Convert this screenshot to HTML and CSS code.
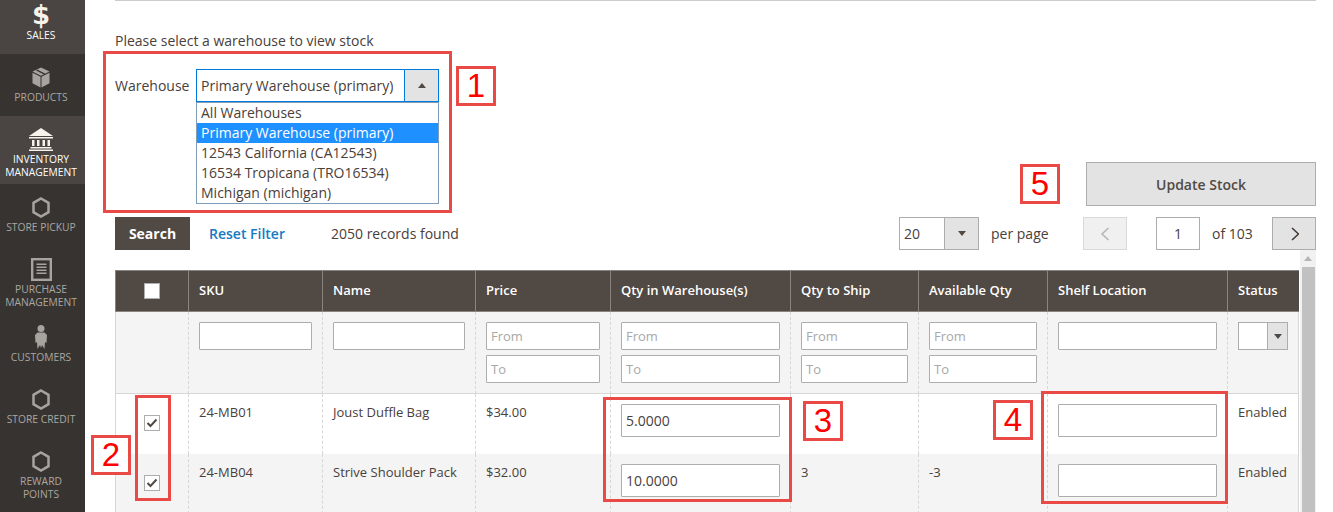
FILE: index.html
```html
<!DOCTYPE html>
<html lang="en">
  <head>
    <meta charset="UTF-8" />
    <meta name="viewport" content="width=device-width, initial-scale=1.0" />
    <title>Warehouse Stock</title>
    <link rel="stylesheet" href="styles.css">
  </head>
  <body>
    <div class="page">
      <nav class="sidebar">
        <a class="nav-item nav-first nav-active">
          <span class="nav-icon nav-dollar">$</span>
          <span class="nav-label">Sales</span>
        </a>
        <a class="nav-item">
          <span class="nav-icon">
            <svg width="18" height="21" viewBox="0 0 18 21"><path d="M9 0.500 17.500 4.500 9 8.800 0.500 4.500Z" fill="#a7a39f"/><path d="M4.500 2.300 13 6.600 13 8 4.500 3.700Z" fill="#373330"/><path d="M0.500 5.800 8.500 9.800V20.500L0.500 16.300Z" fill="#a7a39f"/><path d="M17.500 5.800 9.500 9.800V20.500L17.500 16.300Z" fill="#a7a39f"/></svg>
          </span>
          <span class="nav-label">Products</span>
        </a>
        <a class="nav-item nav-active">
          <span class="nav-icon">
            <svg width="24" height="23" viewBox="0 0 24 23"><path d="M12 0 24 8H0Z" fill="#f7f3eb"/><path d="M0 9h24v1.500H0ZM3 12h2.500v6H3ZM8 12h2.500v6H8ZM13.500 12H16v6h-2.500ZM18.500 12H21v6h-2.500ZM1.500 19h21v1.500h-21ZM0 21.500h24V23H0Z" fill="#f7f3eb"/></svg>
          </span>
          <span class="nav-label">Inventory<br>Management</span>
        </a>
        <a class="nav-item">
          <span class="nav-icon">
            <svg width="18" height="21" viewBox="0 0 18 21"><path d="M9 1.500 16.500 5.800V15.200L9 19.500 1.500 15.200V5.800Z" fill="none" stroke="#a7a39f" stroke-width="2.500"/></svg>
          </span>
          <span class="nav-label">Store Pickup</span>
        </a>
        <a class="nav-item">
          <span class="nav-icon">
            <svg width="21" height="23" viewBox="0 0 21 23"><rect x="1.200" y="1.200" width="18.600" height="20.600" fill="none" stroke="#a7a39f" stroke-width="2.400"/><path d="M5.500 5.500h10v1.500h-10ZM5.500 8.500h10v1.500h-10ZM5.500 11.500h10v1.500h-10ZM5.500 14.500h10v1.500h-10Z" fill="#a7a39f"/></svg>
          </span>
          <span class="nav-label">Purchase<br>Management</span>
        </a>
        <a class="nav-item">
          <span class="nav-icon">
            <svg width="12" height="24" viewBox="0 0 12 24"><circle cx="6" cy="3.500" r="3.500" fill="#a7a39f"/><path d="M2.500 7.500h7L12 10 11.500 18 10 17 9.500 24 7 20 6 23 5 20 2.500 24 2 17 0.500 18 0 10Z" fill="#a7a39f"/></svg>
          </span>
          <span class="nav-label">Customers</span>
        </a>
        <a class="nav-item">
          <span class="nav-icon">
            <svg width="18" height="21" viewBox="0 0 18 21"><path d="M9 1.500 16.500 5.800V15.200L9 19.500 1.500 15.200V5.800Z" fill="none" stroke="#a7a39f" stroke-width="2.500"/></svg>
          </span>
          <span class="nav-label">Store Credit</span>
        </a>
        <a class="nav-item">
          <span class="nav-icon">
            <svg width="18" height="21" viewBox="0 0 18 21"><path d="M9 1.500 16.500 5.800V15.200L9 19.500 1.500 15.200V5.800Z" fill="none" stroke="#a7a39f" stroke-width="2.500"/></svg>
          </span>
          <span class="nav-label">Reward<br>Points</span>
        </a>
      </nav>

      <main class="content">
        <div class="rule"></div>
        <p class="intro">Please select a warehouse to view stock</p>
        <div class="warehouse-row">
          <span class="warehouse-label">Warehouse</span>
          <div class="warehouse-select">
            <span class="warehouse-value">Primary Warehouse (primary)</span>
            <span class="warehouse-arrow"><i class="arrow-up"></i></span>
            <ul class="warehouse-list">
              <li>All Warehouses</li>
              <li class="selected">Primary Warehouse (primary)</li>
              <li>12543 California (CA12543)</li>
              <li>16534 Tropicana (TRO16534)</li>
              <li>Michigan (michigan)</li>
            </ul>
          </div>
        </div>

        <div class="action-row">
          <button class="update-button">Update Stock</button>
        </div>

        <div class="toolbar">
          <button class="search-button">Search</button>
          <a class="reset-link">Reset Filter</a>
          <span class="records">2050 records found</span>
          <div class="pager">
            <div class="select-box page-size">
              <span class="select-text">20</span>
              <span class="select-arrow"><i class="arrow-down"></i></span>
            </div>
            <span class="per-page">per page</span>
            <button class="page-button page-prev">
              <svg width="10" height="16" viewBox="0 0 10 16"><path d="M8.500 2 2 8 8.500 14" fill="none" stroke="#b4b4b4" stroke-width="1.500"/></svg>
            </button>
            <input class="page-input" type="text" value="1" />
            <span class="page-total">of 103</span>
            <button class="page-button page-next">
              <svg width="10" height="16" viewBox="0 0 10 16"><path d="M3 2 9.500 8 3 14" fill="none" stroke="#41362f" stroke-width="1.500"/></svg>
            </button>
          </div>
        </div>

        <div class="grid-area">
          <table class="grid">
            <thead>
              <tr>
                <th class="col-check"><span class="check-box check-head"></span></th>
                <th class="col-sku">SKU</th>
                <th class="col-name">Name</th>
                <th class="col-price">Price</th>
                <th class="col-qty">Qty in Warehouse(s)</th>
                <th class="col-ship">Qty to Ship</th>
                <th class="col-avail">Available Qty</th>
                <th class="col-shelf">Shelf Location</th>
                <th class="col-status">Status</th>
              </tr>
            </thead>
            <tbody>
              <tr class="filters">
                <td></td>
                <td><input type="text" /></td>
                <td><input type="text" /></td>
                <td><input type="text" placeholder="From" /><input type="text" placeholder="To" /></td>
                <td><input type="text" placeholder="From" /><input type="text" placeholder="To" /></td>
                <td><input type="text" placeholder="From" /><input type="text" placeholder="To" /></td>
                <td><input type="text" placeholder="From" /><input type="text" placeholder="To" /></td>
                <td><input type="text" /></td>
                <td>
                  <div class="select-box status-select">
                    <span class="select-text"></span>
                    <span class="select-arrow"><i class="arrow-down"></i></span>
                  </div>
                </td>
              </tr>
              <tr class="row">
                <td class="cell-check"><span class="check-box"><svg width="12" height="10" viewBox="0 0 12 10"><path d="M1.500 5 4.500 8 10.500 1.500" fill="none" stroke="#514943" stroke-width="2"/></svg></span></td>
                <td>24-MB01</td>
                <td>Joust Duffle Bag</td>
                <td>$34.00</td>
                <td><input class="row-input" type="text" value="5.0000" /></td>
                <td></td>
                <td></td>
                <td><input class="row-input" type="text" /></td>
                <td>Enabled</td>
              </tr>
              <tr class="row row-alt">
                <td class="cell-check"><span class="check-box"><svg width="12" height="10" viewBox="0 0 12 10"><path d="M1.500 5 4.500 8 10.500 1.500" fill="none" stroke="#514943" stroke-width="2"/></svg></span></td>
                <td>24-MB04</td>
                <td>Strive Shoulder Pack</td>
                <td>$32.00</td>
                <td><input class="row-input" type="text" value="10.0000" /></td>
                <td>3</td>
                <td>-3</td>
                <td><input class="row-input" type="text" /></td>
                <td>Enabled</td>
              </tr>
            </tbody>
          </table>
          <div class="scrollbar">
            <i class="scroll-arrow"></i>
            <div class="scroll-thumb"></div>
          </div>
        </div>
      </main>

      <!-- screenshot callouts, drawn over the page -->
      <div class="mark mark-warehouse"></div>
      <div class="mark mark-checks"></div>
      <div class="mark mark-qty"></div>
      <div class="mark mark-shelf"></div>
      <div class="tag tag-1">1</div>
      <div class="tag tag-2">2</div>
      <div class="tag tag-3">3</div>
      <div class="tag tag-4">4</div>
      <div class="tag tag-5">5</div>
    </div>
  </body>
</html>
```

FILE: styles.css
```css
* {
  box-sizing: border-box;
}
html,
body {
  margin: 0;
  height: 100%;
  overflow: hidden;
  background-color: #ffffff;
}
body {
  color: #4a403a;
  font-family: 'Open Sans', 'Liberation Sans', sans-serif;
  font-size: 14px;
}
.page {
  position: relative;
  display: flex;
  width: 1333px;
  height: 512px;
  overflow: hidden;
}

/* sidebar */
.sidebar {
  flex: 0 0 85px;
  background-color: #373330;
}
.nav-item {
  display: flex;
  flex-direction: column;
  align-items: center;
  min-height: 62px;
  padding: 11px 3px 5px 0;
  color: #aaa6a0;
}
.nav-first {
  min-height: 54px;
  padding-top: 3px;
}
.nav-active {
  background-color: #4a4542;
  color: #ffffff;
}
.nav-icon {
  display: flex;
  align-items: center;
  justify-content: center;
  height: 24px;
  margin-bottom: 2px;
}
.nav-dollar {
  font-family: 'DejaVu Sans', sans-serif;
  font-size: 26px;
  font-weight: 700;
  color: #f7f3eb;
}
.nav-label {
  font-size: 10.3px;
  line-height: 13px;
  text-align: center;
  text-transform: uppercase;
  white-space: nowrap;
}

/* main column */
.content {
  flex: 1;
  min-width: 0;
  padding: 0 17px 0 30px;
}
.rule {
  height: 1px;
  background-color: #cccccc;
}
.intro {
  margin: 30px 0 0;
  line-height: 20px;
}
.warehouse-row {
  display: flex;
  align-items: center;
  height: 33px;
  margin-top: 18px;
}
.warehouse-label {
  width: 81px;
}
.warehouse-select {
  position: relative;
  display: flex;
  width: 243px;
  height: 33px;
  border: 1px solid #007bdb;
}
.warehouse-value {
  flex: 1;
  padding-left: 4px;
  line-height: 31px;
}
.warehouse-arrow {
  display: flex;
  align-items: center;
  justify-content: center;
  width: 34px;
  border-left: 1px solid #007bdb;
  background-color: #e3e3e3;
}
.arrow-up {
  width: 0;
  height: 0;
  border-left: 4px solid transparent;
  border-right: 4px solid transparent;
  border-bottom: 5px solid #514943;
}
.arrow-down {
  width: 0;
  height: 0;
  border-left: 4px solid transparent;
  border-right: 4px solid transparent;
  border-top: 5px solid #514943;
}
.warehouse-list {
  position: absolute;
  top: 32px;
  left: -1px;
  width: 243px;
  margin: 0;
  padding: 0;
  list-style: none;
  border: 1px solid #7f9db9;
  background-color: #ffffff;
}
.warehouse-list li {
  height: 20px;
  padding-left: 4px;
  line-height: 20px;
}
.warehouse-list .selected {
  background-color: #1e90ff;
  color: #ffffff;
}
.action-row {
  display: flex;
  justify-content: flex-end;
  margin-top: 60px;
}
.update-button {
  width: 230px;
  height: 44px;
  border: 1px solid #adadad;
  background-color: #e3e3e3;
  color: #514943;
  font-family: inherit;
  font-size: 14px;
  font-weight: 600;
}

/* search and pager */
.toolbar {
  display: flex;
  align-items: center;
  height: 33px;
  margin-top: 11px;
}
.search-button {
  width: 75px;
  height: 33px;
  border: none;
  background-color: #514943;
  color: #ffffff;
  font-family: inherit;
  font-size: 14px;
  font-weight: 700;
}
.reset-link {
  margin-left: 19px;
  color: #1979c3;
  font-weight: 600;
}
.records {
  margin-left: 46px;
}
.pager {
  display: flex;
  align-items: center;
  margin-left: auto;
}
.select-box {
  display: flex;
  height: 33px;
  border: 1px solid #adadad;
  background-color: #ffffff;
}
.select-text {
  flex: 1;
  padding-left: 4px;
  line-height: 31px;
}
.select-arrow {
  display: flex;
  align-items: center;
  justify-content: center;
  width: 34px;
  border-left: 1px solid #adadad;
  background-color: #e3e3e3;
}
.page-size {
  width: 80px;
}
.per-page {
  width: 104px;
  padding-left: 12px;
}
.page-button {
  display: flex;
  align-items: center;
  justify-content: center;
  width: 44px;
  height: 33px;
  padding: 0;
  border: 1px solid #adadad;
  background-color: #e3e3e3;
}
.page-prev {
  border-color: #d9d9d9;
  background-color: #f0f0f0;
}
.page-input {
  width: 44px;
  height: 33px;
  margin-left: 29px;
  border: 1px solid #adadad;
  color: #4a403a;
  font-family: inherit;
  font-size: 14px;
  text-align: center;
}
.page-total {
  width: 72px;
  padding-left: 12px;
}

/* grid */
.grid-area {
  display: flex;
  justify-content: space-between;
}
.grid {
  width: 1184px;
  height: 244px;
  margin-top: 20px;
  border-collapse: separate;
  border-spacing: 0;
  table-layout: fixed;
  font-size: 13px;
}
.grid th {
  height: 42px;
  padding: 0 10px 2px;
  border-top: 1px solid #8a837e;
  border-bottom: 1px solid #8a837e;
  border-left: 1px solid #8a837e;
  background-color: #514943;
  color: #ffffff;
  font-weight: 600;
  text-align: left;
}
.col-check { width: 73px; }
.col-sku { width: 134px; }
.col-name { width: 153px; }
.col-price { width: 135px; }
.col-qty { width: 180px; }
.col-ship { width: 128px; }
.col-avail { width: 129px; }
.col-shelf { width: 180px; }
.col-status { width: 72px; }
.grid td {
  padding: 10px;
  border-left: 1px dashed #d6d6d6;
  vertical-align: top;
  line-height: 16px;
}
.grid td:first-child {
  border-left: 1px solid #d6d6d6;
}
.grid td:last-child {
  border-right: 1px solid #d6d6d6;
}
.grid input {
  display: block;
  width: 100%;
  height: 28px;
  padding: 0 4px;
  border: 1px solid #adadad;
  border-radius: 1px;
  color: #4a403a;
  font-family: inherit;
  font-size: 13px;
}
.grid input + input {
  margin-top: 5px;
}
.grid input::placeholder {
  color: #a8a8a8;
}
.filters td {
  height: 82px;
  background-color: #f4f4f4;
  border-bottom: 1px solid #d6d6d6;
}
.grid .row td {
  height: 60px;
}
.grid .row-alt td {
  background-color: #f4f4f4;
}
.grid .row-input {
  height: 33px;
  font-size: 14px;
}
.grid .cell-check {
  padding: 21px 0 0;
}
.check-box {
  display: flex;
  align-items: center;
  justify-content: center;
  width: 16px;
  height: 16px;
  margin: 0 auto;
  border: 1px solid #adadad;
  background-color: #ffffff;
}
.check-head {
  margin-top: 1px;
}
.status-select {
  height: 28px;
}
.status-select .select-arrow {
  width: 20px;
}
.scrollbar {
  display: flex;
  flex-direction: column;
  align-items: center;
  width: 16px;
  height: 262px;
  background-color: #f1f1f1;
}
.scroll-arrow {
  width: 0;
  height: 0;
  margin-top: 6px;
  border-left: 4px solid transparent;
  border-right: 4px solid transparent;
  border-bottom: 5px solid #b5b5b5;
}
.scroll-thumb {
  flex: 1;
  width: 13px;
  margin-top: 6px;
  background-color: #c1c1c1;
}

/* callouts */
.mark {
  position: absolute;
  border: 3px solid #ea4a46;
}
.mark-warehouse { left: 103px; top: 51px; width: 349px; height: 162px; }
.mark-checks { left: 135px; top: 395px; width: 36px; height: 106px; }
.mark-qty { left: 603px; top: 397px; width: 189px; height: 105px; }
.mark-shelf { left: 1041px; top: 391px; width: 187px; height: 113px; }
.tag {
  position: absolute;
  width: 40px;
  height: 40px;
  border: 3px solid #ea4a46;
  background-color: #ffffff;
  color: #ff0000;
  font-family: 'Liberation Sans', Arial, sans-serif;
  font-size: 33px;
  line-height: 34px;
  text-align: center;
}
.tag-1 { left: 456px; top: 66px; }
.tag-2 { left: 91px; top: 435px; }
.tag-3 { left: 803px; top: 401px; }
.tag-4 { left: 993px; top: 400px; }
.tag-5 { left: 1020px; top: 164px; }
```
